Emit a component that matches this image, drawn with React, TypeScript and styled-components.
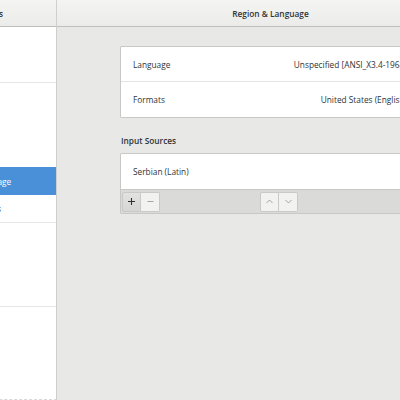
import styled, { createGlobalStyle } from "styled-components";

const GlobalStyle = createGlobalStyle`
	html, body {
		margin: 0;
		padding: 0;
		overflow: hidden;
		background: #e8e8e7;
	}
	* {
		box-sizing: border-box;
	}
`;

const Window = styled.div`
	width: 400px;
	height: 400px;
	overflow: hidden;
	display: flex;
	font-family: "Open Sans", "Noto Sans", sans-serif;
	font-size: 8.3px;
	color: #2e3436;
`;

const SideColumn = styled.div`
	width: 57px;
	flex-shrink: 0;
	display: flex;
	flex-direction: column;
	border-right: 1px solid #cfcfcd;
	overflow: hidden;
`;

const MainColumn = styled.div`
	width: 427px;
	flex-shrink: 0;
	display: flex;
	flex-direction: column;
	background: #e8e8e7;
`;

const HeaderBar = styled.div<{ $align?: string }>`
	height: 27px;
	flex-shrink: 0;
	display: flex;
	align-items: center;
	justify-content: ${(p) => p.$align || "center"};
	background: linear-gradient(#f4f4f3, #ebebea);
	border-bottom: 1px solid #bfbfbd;
	font-weight: 600;
	white-space: nowrap;
`;

const SideTitle = styled.span`
	margin-left: -29px;
`;

const SideList = styled.div`
	flex: 1;
	background: #ffffff;
	margin-left: -110px;
	width: 167px;
	border-bottom: 1px dashed #d8d8d8;
`;

const SideItem = styled.div<{ $selected?: boolean; $sep?: boolean }>`
	height: 28px;
	display: flex;
	align-items: center;
	padding-left: 47px;
	white-space: nowrap;
	background: ${(p) => (p.$selected ? "#4a90d9" : "transparent")};
	color: ${(p) => (p.$selected ? "#ffffff" : "#2e3436")};
	border-bottom: ${(p) => (p.$sep ? "1px solid #e6e6e5" : "none")};
`;

const Content = styled.div`
	display: flex;
	flex-direction: column;
	width: 301px;
	margin: 19px auto 0;
`;

const Card = styled.div`
	background: #ffffff;
	border: 1px solid #c8c8c6;
	border-radius: 1px;
`;

const Row = styled.div<{ $last?: boolean }>`
	height: 35px;
	display: flex;
	align-items: center;
	justify-content: space-between;
	padding: 0 13px 0 12px;
	white-space: nowrap;
	border-bottom: ${(p) => (p.$last ? "none" : "1px solid #e4e4e3")};
`;

const Value = styled.span`
	color: #2e3436;
`;

const SectionLabel = styled.div`
	font-weight: 600;
	margin: 16px 0 6px 1px;
	height: 13px;
	line-height: 13px;
`;

const Toolbar = styled.div`
	height: 24px;
	display: flex;
	align-items: center;
	padding: 0 1px;
	background: #dadad8;
	border-top: 1px solid #c8c8c6;
`;

const ButtonGroup = styled.div<{ $offset?: number }>`
	display: flex;
	margin-left: ${(p) => p.$offset || 0}px;
`;

const ToolButton = styled.div<{ $active?: boolean; $first?: boolean }>`
	width: 19px;
	height: 20px;
	display: flex;
	align-items: center;
	justify-content: center;
	border: 1px solid #c9c9c7;
	border-left-width: ${(p) => (p.$first ? 1 : 0)}px;
	border-radius: ${(p) => (p.$first ? "2px 0 0 2px" : "0 2px 2px 0")};
	background: ${(p) =>
		p.$active ? "linear-gradient(#e2e2e1, #d6d6d4)" : "#f2f2f1"};
	color: ${(p) => (p.$active ? "#2e3436" : "#9a9d9a")};
`;

const Glyph = ({ d, w = 1.1 }: { d: string; w?: number }) => (
	<svg width="9" height="9" viewBox="0 0 9 9" fill="none">
		<path d={d} stroke="currentColor" strokeWidth={w} />
	</svg>
);

const sideItems = [
	{ label: "Wi-Fi" },
	{ label: "Bluetooth", sep: true },
	{ label: "Background" },
	{ label: "Notifications" },
	{ label: "Search" },
	{ label: "Region & Language", selected: true },
	{ label: "Universal Access", sep: true },
	{ label: "Online Account" },
	{ label: "Privacy" },
	{ label: "Sharing", sep: true },
	{ label: "Sound" },
	{ label: "Power" },
	{ label: "Network" },
];

export default function App() {
	return (
		<>
			<GlobalStyle />
			<Window>
				<SideColumn>
					<HeaderBar $align="flex-start">
						<SideTitle>Settings</SideTitle>
					</HeaderBar>
					<SideList>
						{sideItems.map((item) => (
							<SideItem
								key={item.label}
								$selected={item.selected}
								$sep={item.sep}>
								{item.label}
							</SideItem>
						))}
					</SideList>
				</SideColumn>
				<MainColumn>
					<HeaderBar>Region &amp; Language</HeaderBar>
					<Content>
						<Card>
							<Row>
								<span>Language</span>
								<Value>Unspecified [ANSI_X3.4-1968]</Value>
							</Row>
							<Row $last>
								<span>Formats</span>
								<Value>United States (English)</Value>
							</Row>
						</Card>
						<SectionLabel>Input Sources</SectionLabel>
						<Card>
							<Row $last>
								<span>Serbian (Latin)</span>
							</Row>
							<Toolbar>
								<ButtonGroup>
									<ToolButton $active $first>
										<Glyph d="M4.5 1v7M1 4.5h7" />
									</ToolButton>
									<ToolButton>
										<Glyph d="M1.5 4.5h6" w={0.9} />
									</ToolButton>
								</ButtonGroup>
								<ButtonGroup $offset={100}>
									<ToolButton $first>
										<Glyph d="M1.5 6l3-3 3 3" w={0.9} />
									</ToolButton>
									<ToolButton>
										<Glyph d="M1.5 3l3 3 3-3" w={0.9} />
									</ToolButton>
								</ButtonGroup>
							</Toolbar>
						</Card>
					</Content>
				</MainColumn>
			</Window>
		</>
	);
}
